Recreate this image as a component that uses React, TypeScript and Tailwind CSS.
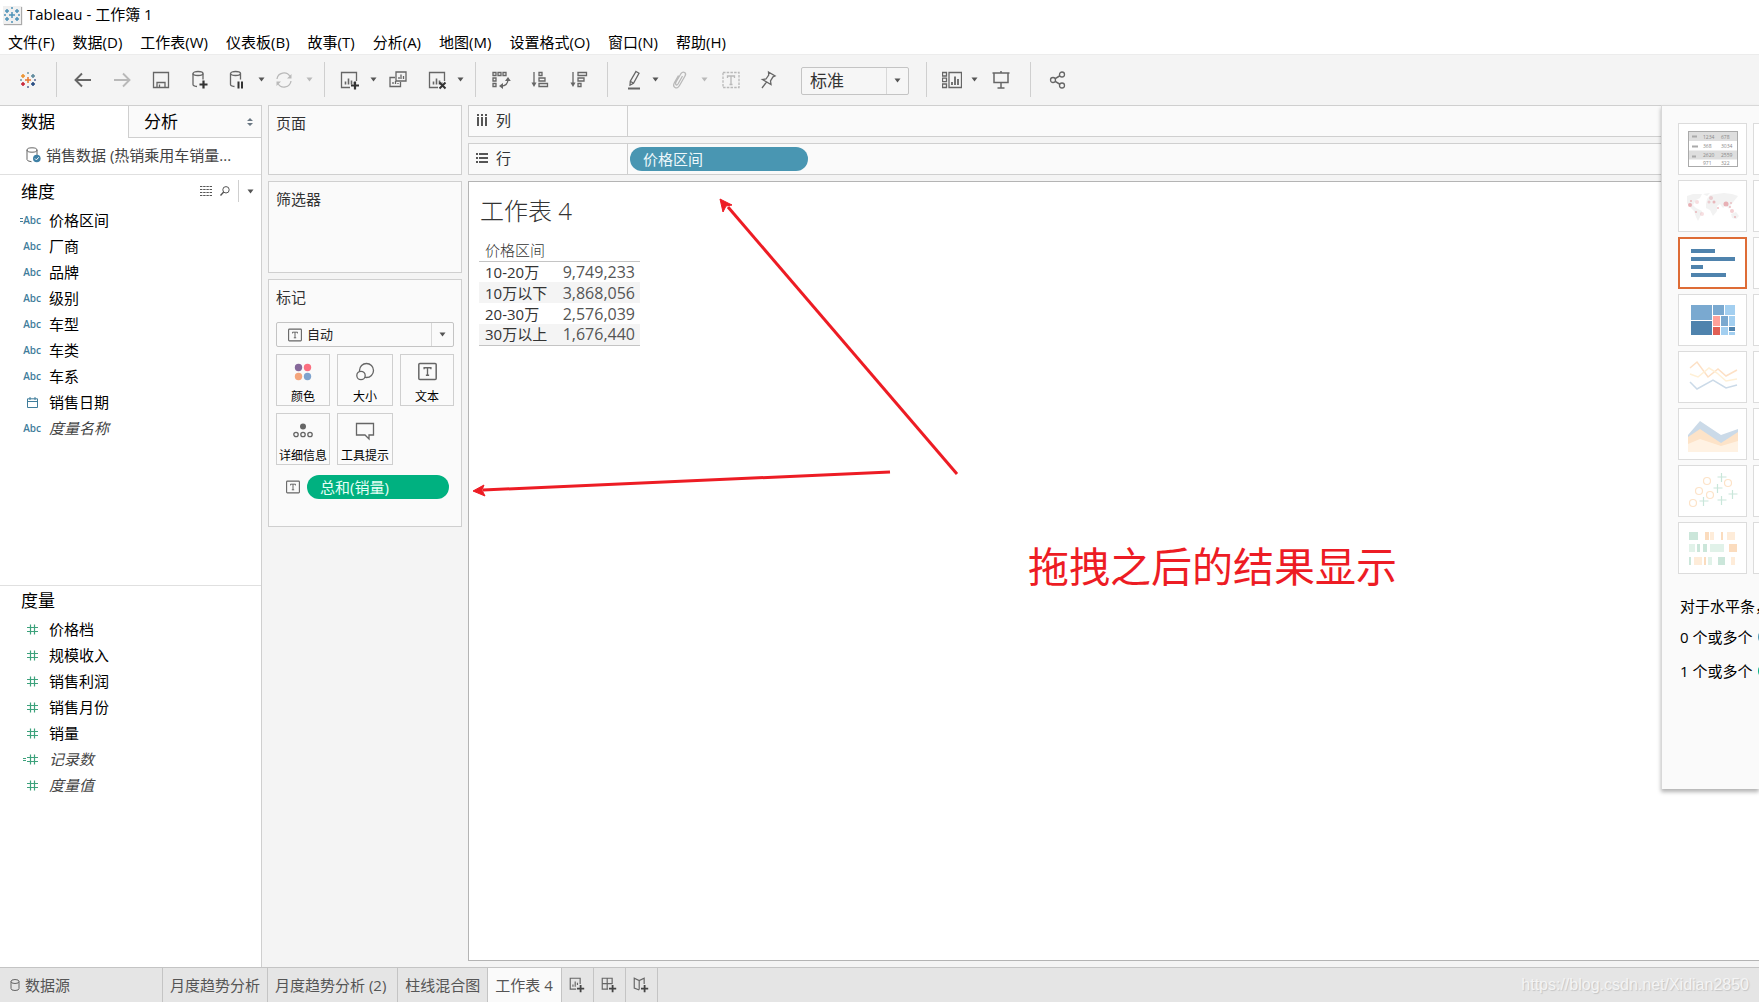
import type { ReactNode } from "react";

interface Field {
  name: string;
  icon: "abc" | "abc-calc" | "date" | "num" | "num-calc";
  italic?: boolean;
}

const MENUS = ["文件(F)", "数据(D)", "工作表(W)", "仪表板(B)", "故事(T)", "分析(A)", "地图(M)", "设置格式(O)", "窗口(N)", "帮助(H)"];

const DIMENSIONS: Field[] = [
  { name: "价格区间", icon: "abc-calc" },
  { name: "厂商", icon: "abc" },
  { name: "品牌", icon: "abc" },
  { name: "级别", icon: "abc" },
  { name: "车型", icon: "abc" },
  { name: "车类", icon: "abc" },
  { name: "车系", icon: "abc" },
  { name: "销售日期", icon: "date" },
  { name: "度量名称", icon: "abc", italic: true },
];

const MEASURES: Field[] = [
  { name: "价格档", icon: "num" },
  { name: "规模收入", icon: "num" },
  { name: "销售利润", icon: "num" },
  { name: "销售月份", icon: "num" },
  { name: "销量", icon: "num" },
  { name: "记录数", icon: "num-calc", italic: true },
  { name: "度量值", icon: "num", italic: true },
];

const ROWS = [
  { label: "10-20万", value: "9,749,233" },
  { label: "10万以下", value: "3,868,056" },
  { label: "20-30万", value: "2,576,039" },
  { label: "30万以上", value: "1,676,440" },
];

/* ---------- small drawings ---------- */

const LOGO_MARKS = [
  { x: 9, y: 9, r: 3, c: "#e8762d" },
  { x: 4, y: 5, r: 2, c: "#eb912c" },
  { x: 14, y: 5, r: 2, c: "#5b879b" },
  { x: 4, y: 13, r: 2, c: "#c72035" },
  { x: 14, y: 13, r: 2, c: "#1f457e" },
  { x: 9, y: 2, r: 1, c: "#7099a6" },
  { x: 9, y: 16, r: 1, c: "#5c6692" },
  { x: 2, y: 9, r: 1, c: "#7099a6" },
  { x: 16, y: 9, r: 1, c: "#5c6692" },
];

function TableauLogo({ mono }: { mono?: boolean }) {
  return (
    <svg width="18" height="18" viewBox="0 0 18 18" fill="none">
      {LOGO_MARKS.map((m, i) => (
        <path
          key={i}
          d={`M${m.x - m.r} ${m.y}h${m.r * 2}M${m.x} ${m.y - m.r}v${m.r * 2}`}
          stroke={mono ? "#4f93b8" : m.c}
          strokeWidth={m.r === 1 ? 1 : 1.5}
        />
      ))}
    </svg>
  );
}

function Icon({ children, faint, size = 20 }: { children: ReactNode; faint?: boolean; size?: number }) {
  return (
    <svg width={size} height={size} viewBox="0 0 20 20" fill="none" stroke={faint ? "#b9b9b9" : "#666"} strokeWidth="1.3">
      {children}
    </svg>
  );
}

function Caret({ faint, className }: { faint?: boolean; className?: string }) {
  return (
    <svg width="7" height="5" viewBox="0 0 7 5" className={className}>
      <path d="M0.5 0.5h6L3.5 4.5z" fill={faint ? "#b9b9b9" : "#555"} />
    </svg>
  );
}

function TextMark({ size = 14 }: { size?: number }) {
  return (
    <svg width={size} height={size} viewBox="0 0 14 14" fill="none" stroke="#666">
      <rect x="0.6" y="1.1" width="12.8" height="11.8" rx="0.8" strokeWidth="1.1" />
      <path d="M4.5 5.4V4.2h5v1.2M7 4.2v5.6M5.8 9.8h2.4" strokeWidth="1" />
    </svg>
  );
}

const BARS = <path d="M6.5 11.5v3M9.5 8.5v6M12.5 10.5v4M15 12.5v1" strokeWidth="1.6" />;

function FieldIcon({ icon }: { icon: Field["icon"] }) {
  if (icon === "date") {
    return (
      <svg width="11" height="11" viewBox="0 0 11 11" fill="none" stroke="#3f7d9b" className="mr-[3px]">
        <path d="M0.5 1.8h10v8.7h-10zM0.5 4.5h10M3 0v3M8 0v3" />
      </svg>
    );
  }
  if (icon === "abc" || icon === "abc-calc") {
    return (
      <span className="flex items-center text-[10px] leading-none font-semibold text-[#3f7d9b]">
        {icon === "abc-calc" && (
          <svg width="3" height="4" viewBox="0 0 3 4" fill="#3f7d9b"><path d="M0 0h3v1H0zM0 3h3v1H0z" /></svg>
        )}
        Abc
      </span>
    );
  }
  return (
    <svg width="15" height="11" viewBox="0 0 15 11" fill="none" stroke="#3da27c" className="mr-[3px]">
      <path d="M4 3.5h11M4 7.5h11M7.5 0.5v10M11.5 0.5v10" strokeWidth="1.2" />
      {icon === "num-calc" && <path d="M0 4.5h3M0 6.5h3" />}
    </svg>
  );
}

/* ---------- toolbar ---------- */

function Tool({ label, className, children }: { label: string; className: string; children: ReactNode }) {
  return (
    <button type="button" aria-label={label} className={`flex h-8 shrink-0 items-center justify-center ${className}`}>
      {children}
    </button>
  );
}

function Sep({ className }: { className: string }) {
  return <div className={`h-[35px] w-px shrink-0 bg-[#cfcfcf] ${className}`} />;
}

function Toolbar() {
  return (
    <div className="flex h-[51px] shrink-0 items-center border-t border-[#ececec] bg-[#f4f4f4] pb-px">
      <Tool label="起始页" className="mr-px w-[55px]"><TableauLogo /></Tool>
      <Sep className="mr-1.5" />
      <Tool label="撤消" className="w-[39px]"><Icon><path d="M18 10H3M9 3.5L2.5 10 9 16.5" strokeWidth="1.9" /></Icon></Tool>
      <Tool label="重做" className="w-[39px]"><Icon faint><path d="M2 10h15M11 3.5L17.5 10 11 16.5" strokeWidth="1.9" /></Icon></Tool>
      <Tool label="保存" className="w-[39px]">
        <Icon><path d="M2.5 2.5h15v15h-15zM6 17v-4.5h8V17M8.5 17v-2.5" /></Icon>
      </Tool>
      <Tool label="新建数据源" className="w-[39px]">
        <Icon>
          <ellipse cx="8" cy="3.5" rx="5" ry="2" />
          <path d="M3 3.5v11q0 1.6 4 2M13 3.5v6" />
          <path d="M13.5 10.5v8M9.5 14.5h8" stroke="#333" strokeWidth="2.2" />
        </Icon>
      </Tool>
      <Tool label="暂停自动更新" className="w-[37px]">
        <Icon>
          <ellipse cx="7.5" cy="3.5" rx="5" ry="2" />
          <path d="M2.5 3.5v11q0 1.6 4 2M12.5 3.5v6" />
          <path d="M10.5 11.5v7M14 11.5v7" stroke="#333" strokeWidth="2" />
        </Icon>
      </Tool>
      <Tool label="更新选项" className="w-2.5"><Caret /></Tool>
      <Tool label="运行更新" className="w-9">
        <Icon faint>
          <path d="M3 9a7 7 0 0 1 13-2.5M17 11a7 7 0 0 1-13 2.5" />
          <path d="M17.5 4v4.5H13zM2.5 16v-4.5H7z" fill="#b9b9b9" stroke="none" />
        </Icon>
      </Tool>
      <Tool label="刷新选项" className="w-3.5"><Caret faint /></Tool>
      <Sep className="mr-[5px] ml-2" />
      <Tool label="新建工作表" className="w-[38px]">
        <Icon>
          <path d="M11 17.5H2.5v-15h15V11" />
          {BARS}
          <path d="M16 11.5v8M12 15.5h8" stroke="#333" strokeWidth="2.2" />
        </Icon>
      </Tool>
      <Tool label="新建选项" className="w-2.5"><Caret /></Tool>
      <Tool label="复制工作表" className="w-10">
        <Icon>
          <path d="M8 2h10v9H8zM7 7.5H2v9h10.5V12M11 9V7M13 9V4.5M15.5 9V6M5 14v-2M7.5 14v-3M10 14v-1" />
        </Icon>
      </Tool>
      <Tool label="清除工作表" className="w-[37px]">
        <Icon>
          <path d="M11 17.5H2.5v-15h15V11" />
          {BARS}
          <path d="M12.5 12.5l6 6M18.5 12.5l-6 6" stroke="#333" strokeWidth="2" />
        </Icon>
      </Tool>
      <Tool label="清除选项" className="w-2.5"><Caret /></Tool>
      <Sep className="mr-[5px] ml-2.5" />
      <Tool label="交换行和列" className="w-[39px]">
        <Icon>
          <path d="M2 2.5h3v3H2zM7 2.5h3v3H7zM12 2.5h3v3h-3zM2 8h3v3H2zM2 13.5h3v3H2zM17 9q0 7-7 7" />
          <path d="M14 11l3-4 2.8 4zM12 13l-4 3 4 3z" fill="#666" stroke="none" />
        </Icon>
      </Tool>
      <Tool label="升序排序" className="w-[39px]">
        <Icon>
          <path d="M4 2v12M9 2.5h3v3H9zM9 8h6v3H9zM9 13.5h8.5v3H9z" />
          <path d="M1.5 12.5h5L4 17z" fill="#666" stroke="none" />
        </Icon>
      </Tool>
      <Tool label="降序排序" className="w-10">
        <Icon>
          <path d="M4 2v12M9 2.5h8.5v3H9zM9 8h6v3H9zM9 13.5h3v3H9z" />
          <path d="M1.5 12.5h5L4 17z" fill="#666" stroke="none" />
        </Icon>
      </Tool>
      <Sep className="mr-2.5 ml-2" />
      <Tool label="突出显示" className="w-8">
        <Icon>
          <path d="M12 1.5l3 1.7-5.5 10-3.5 2 .3-4zM6.3 11.2l3.2 2" />
          <path d="M4 18.5h12" strokeWidth="2" />
        </Icon>
      </Tool>
      <Tool label="突出显示选项" className="w-2.5"><Caret /></Tool>
      <Tool label="对成员分组" className="w-[39px]">
        <Icon faint>
          <path d="M12.5 6L8 14q-1 1.5-2 .8t0-2.8l5-8.5q1.8-2.2 3.6-1t.4 3.5l-5.5 9.5q-2 3.5-4.500 2t-.5-5l4-7" />
        </Icon>
      </Tool>
      <Tool label="分组选项" className="w-2.5"><Caret faint /></Tool>
      <Tool label="显示标记标签" className="w-11">
        <Icon faint>
          <path d="M2 2.5h16v15H2z" strokeDasharray="2.5 1.2" />
          <path d="M6.5 8V6h7v2M10 6v8.5M8.5 14.5h3" />
        </Icon>
      </Tool>
      <Tool label="固定轴" className="w-[30px]">
        <Icon>
          <path d="M10.5 2l6.5 4-2 .8-2.5 4 .5 3.7L4.5 9.5 8 9l2.7-4zM8.5 12L4 18" />
        </Icon>
      </Tool>
      <label className="mt-0.5 ml-[18px] flex h-[28px] w-[108px] shrink-0 items-stretch rounded-[2px] border border-[#c4c4c4] bg-[#f6f6f6]">
        <select aria-label="适合" className="min-w-0 flex-1 appearance-none pl-2 text-[17px] leading-6 text-[#333] outline-none">
          <option>标准</option>
        </select>
        <span className="flex w-[22px] items-center justify-center border-l border-[#d8d8d8]"><Caret /></span>
      </label>
      <Sep className="mr-2 ml-[17px]" />
      <Tool label="显示/隐藏卡" className="w-[34px]">
        <Icon>
          <path d="M0.5 2.5h4v3.5h-4zM0.5 8.2h4v3.5h-4zM0.5 14h4v3.5h-4zM7 2.5h12.5v15H7z" />
          <path d="M10 15v-3M13 15V6.5M16 15V9" strokeWidth="1.8" />
        </Icon>
      </Tool>
      <Tool label="卡选项" className="w-2.5"><Caret /></Tool>
      <Tool label="演示模式" className="w-11">
        <Icon><path d="M1.5 3h17M3 3v9.5h14V3M10 12.5V18M6.5 18h7M10 1v2" strokeWidth="1.5" /></Icon>
      </Tool>
      <Sep className="mr-2 ml-[7px]" />
      <Tool label="共享" className="w-[38px]">
        <Icon>
          <circle cx="5" cy="10" r="2.5" />
          <circle cx="14" cy="4.5" r="2.5" />
          <circle cx="14" cy="15.5" r="2.5" />
          <path d="M7.2 8.6l4.7-2.8M7.2 11.4l4.7 2.8" strokeWidth="1.6" />
        </Icon>
      </Tool>
    </div>
  );
}

/* ---------- left data pane ---------- */

function FieldList({ fields }: { fields: Field[] }) {
  return (
    <ul>
      {fields.map((f) => (
        <li key={f.name} className="flex h-[26px] items-center">
          <span className="flex w-[41px] shrink-0 items-center justify-end">
            <FieldIcon icon={f.icon} />
          </span>
          <span className={`ml-2 text-[15px] leading-5 ${f.italic ? "text-[#444] italic" : "text-black"}`}>{f.name}</span>
        </li>
      ))}
    </ul>
  );
}

function DataPane() {
  return (
    <aside className="flex w-[262px] shrink-0 flex-col border-t border-r border-[#cfcfcf] bg-white">
      <div className="flex h-[32px] shrink-0">
        <button type="button" className="w-[128px] pl-[21px] text-left text-[17px] text-black">数据</button>
        <button type="button" className="flex flex-1 items-center justify-between border-b border-l border-[#cfcfcf] bg-[#fafafa] pr-2 pl-[15px] text-[17px] text-black">
          分析
          <svg width="6" height="8" viewBox="0 0 6 8" fill="#6a7783"><path d="M3 0l3 3H0zM0 5h6L3 8z" /></svg>
        </button>
      </div>
      <div className="flex h-[37px] shrink-0 items-center border-b border-[#e0e0e0] pb-0.5 pl-[26px]">
        <svg width="15" height="16" viewBox="0 0 15 16" fill="none" stroke="#666">
          <ellipse cx="6" cy="3" rx="5" ry="2.2" />
          <path d="M1 3v9.5q0 1.8 4.5 2.2M11 3v5" />
          <circle cx="10.8" cy="11.5" r="3.8" fill="#3f81a6" stroke="none" />
          <path d="M9 11.5l1.4 1.4 2.3-2.6" stroke="#fff" />
        </svg>
        <span className="ml-[5px] text-[15px] whitespace-nowrap text-[#444]">销售数据 (热销乘用车销量...</span>
      </div>
      <section className="h-[410px] shrink-0">
        <div className="flex h-8 items-center pl-[21px]">
          <h2 className="flex-1 pt-0.5 text-[17px] text-black">维度</h2>
          <button type="button" aria-label="查看数据" className="mr-2">
            <svg width="12" height="10" viewBox="0 0 12 10" stroke="#555"><path d="M0 0.5h12M0 3.5h12M0 6.5h12M0 9.5h12" strokeDasharray="2.4 0.8" /></svg>
          </button>
          <button type="button" aria-label="查找字段" className="mr-2">
            <svg width="10" height="10" viewBox="0 0 10 10" fill="none" stroke="#555"><circle cx="6" cy="3.8" r="3.2" /><path d="M3.7 6L0.5 9.5" strokeWidth="1.4" /></svg>
          </button>
          <div className="h-[22px] w-px bg-[#cfcfcf]" />
          <button type="button" aria-label="维度菜单" className="flex w-[22px] justify-center"><Caret /></button>
        </div>
        <FieldList fields={DIMENSIONS} />
      </section>
      <section className="border-t border-[#e0e0e0]">
        <h2 className="flex h-[30px] items-center pl-[21px] text-[17px] text-black">度量</h2>
        <FieldList fields={MEASURES} />
      </section>
    </aside>
  );
}

/* ---------- cards ---------- */

function Card({ title, className, children }: { title: string; className: string; children?: ReactNode }) {
  return (
    <section className={`border border-[#cfcfcf] bg-[#fafafa] px-[7px] ${className}`}>
      <h3 className="pt-1.5 text-[15px] leading-[22px] text-[#333]">{title}</h3>
      {children}
    </section>
  );
}

function MarkButton({ label, children }: { label: string; children: ReactNode }) {
  return (
    <button type="button" className="flex h-[52px] flex-col items-center justify-between border border-[#cfcfcf] pt-[7px] text-[12px] leading-4 whitespace-nowrap text-black">
      {children}
      <span>{label}</span>
    </button>
  );
}

function Cards() {
  return (
    <div className="ml-1.5 flex w-[194px] shrink-0 flex-col gap-[6px]">
      <Card title="页面" className="h-[70px]" />
      <Card title="筛选器" className="h-[92px]" />
      <Card title="标记" className="h-[248px]">
        <label className="mt-3.5 flex h-[25px] items-stretch rounded-[2px] border border-[#c4c4c4]">
          <span className="flex w-[30px] items-center justify-end pr-[5px]"><TextMark /></span>
          <select aria-label="标记类型" className="min-w-0 flex-1 appearance-none text-[13px] text-[#222] outline-none">
            <option>自动</option>
          </select>
          <span className="flex w-[22px] items-center justify-center border-l border-[#d8d8d8]"><Caret /></span>
        </label>
        <div className="mt-[7px] grid grid-cols-[54fr_56fr_54fr] gap-[7px]">
          <MarkButton label="颜色">
            <svg width="20" height="20" viewBox="0 0 20 20">
              <circle cx="5.5" cy="5.5" r="3.7" fill="#86699a" />
              <circle cx="14.5" cy="5.5" r="3.7" fill="#fb6f80" />
              <circle cx="5.5" cy="14.5" r="3.7" fill="#f4a57c" />
              <circle cx="14.5" cy="14.5" r="3.7" fill="#7fa3cd" />
            </svg>
          </MarkButton>
          <MarkButton label="大小">
            <Icon><circle cx="11.5" cy="8.5" r="7" /><circle cx="6" cy="13.5" r="4.2" fill="#fafafa" /></Icon>
          </MarkButton>
          <MarkButton label="文本"><TextMark size={19} /></MarkButton>
          <MarkButton label="详细信息">
            <Icon>
              <circle cx="10" cy="5.5" r="3" fill="#666" stroke="none" />
              <circle cx="3" cy="13.5" r="2.2" />
              <circle cx="10" cy="13.5" r="2.2" />
              <circle cx="17" cy="13.5" r="2.2" />
            </Icon>
          </MarkButton>
          <MarkButton label="工具提示">
            <Icon><path d="M1.5 2.5h17v11.5H14v4l-4-4H1.5z" /></Icon>
          </MarkButton>
        </div>
        <div className="mt-2.5 flex items-center pr-[5px] pl-[10px]">
          <TextMark />
          <div className="ml-[7px] flex h-6 flex-1 items-center rounded-full bg-[#00b180] pl-[13px] text-[15px] text-[#e8fff6]">总和(销量)</div>
        </div>
      </Card>
    </div>
  );
}

/* ---------- sheet ---------- */

function Shelf({ label, icon, children }: { label: string; icon: ReactNode; children?: ReactNode }) {
  return (
    <div className="flex h-8 shrink-0 items-stretch border border-r-0 border-[#cfcfcf] bg-[#fafafa]">
      <div className="flex w-[159px] items-center border-r border-[#cfcfcf] pb-0.5 pl-[7px] text-[15px] text-[#333]">
        {icon}
        <span className="ml-[7px]">{label}</span>
      </div>
      <div className="flex flex-1 items-center pl-0.5">{children}</div>
    </div>
  );
}

function Sheet() {
  return (
    <div className="relative min-h-0 flex-1 border border-r-0 border-[#b4b4b4] bg-white pt-[11px] pl-2.5">
      <h1 className="pl-px text-[24px] leading-9 font-light text-[#333]">工作表 4</h1>
      <table className="mt-2.5 w-[161px] border-b border-[#c4c4c4] text-[#333]">
        <thead>
          <tr className="border-b border-[#c4c4c4]">
            <th colSpan={2} scope="col" className="h-[22px] pl-1.5 text-left text-[15px] leading-5 font-light">价格区间</th>
          </tr>
        </thead>
        <tbody>
          {ROWS.map((r) => (
            <tr key={r.label} className="h-[21px] even:bg-[#f4f4f4]">
              <th scope="row" className="pl-1.5 text-left text-[15px] leading-5 font-normal whitespace-nowrap">{r.label}</th>
              <td className="pr-[5px] text-right text-[16px] leading-5 text-[#555]">{r.value}</td>
            </tr>
          ))}
        </tbody>
      </table>

      {/* annotations drawn over the sheet */}
      <svg width="500" height="320" viewBox="0 0 500 320" className="absolute top-[10px] left-0" fill="#ed1c24" stroke="#ed1c24">
        <path d="M488 282L259 15" strokeWidth="3" />
        <path d="M251 7l12 6-6 1-3 6z" strokeWidth="1" />
        <path d="M421 280L14 298" strokeWidth="3" />
        <path d="M4 299l11-6-2 5 3 6z" strokeWidth="1" />
      </svg>
      <p className="absolute top-[356px] left-[559px] text-[41px] leading-[56px] whitespace-nowrap text-[#ed1c24]">拖拽之后的结果显示</p>
    </div>
  );
}

/* ---------- show me ---------- */

const SCATTER_RINGS = [[12, 36], [18, 24], [26, 14], [29, 28], [47, 16]];
const SCATTER_CROSSES = [[21.5, 33], [35.5, 20], [39.5, 9], [39.5, 32], [50.5, 26]];
const MAP_DOTS = [
  [8, 23, 2, 0.45], [9, 19, 1, 0.4], [15, 20, 2, 0.2], [14, 30, 1, 0.4], [20, 32, 2, 0.2], [27, 20, 1.5, 0.25], [29, 16, 2, 0.25],
  [32, 20, 1.5, 0.4], [36, 26, 1, 0.4], [44, 22, 2.5, 0.45], [49, 21, 1, 0.35], [48, 25, 1, 0.4], [50, 29, 2, 0.3], [53, 35, 1, 0.4],
];

const THUMBS: { name: string; art: ReactNode }[] = [
  {
    name: "文本表",
    art: (
      <>
        <rect x="8.5" y="7.5" width="49" height="35" fill="#fff" stroke="#aaa" />
        <path d="M9 12.5h48M9 31h48" stroke="#dedede" strokeWidth="9" />
        <path d="M12 12.5h5M12 22.5h6M12 32.5h4" stroke="#aaa" strokeWidth="2" />
        <g fontSize="5" fill="#888">
          <text x="23" y="15">1234</text><text x="41" y="15">678</text>
          <text x="23" y="24">368</text><text x="41" y="24">3034</text>
          <text x="23" y="33">2620</text><text x="41" y="33">2559</text>
          <text x="23" y="41">971</text><text x="41" y="41">322</text>
        </g>
      </>
    ),
  },
  {
    name: "符号地图",
    art: (
      <>
        <path
          d="M7 15l6-2 9 0-2 4-4 2-3 5 3 3 6 3-1 4-2 4-1 2-2-4-2-6-4-4-3-4zM23 13l7-1-3 3zM27 18l3-4 6-1 8-1 8 1 6 2-4 5-3 4-2 4-3-4-3 3-3-4-3 2 0 5-4 5-3-6-4-2 0-4zM51 33l5-2 3 4-3 3-4-1z"
          fill="#f2f2f2"
        />
        {MAP_DOTS.map(([x, y, r, o]) => <circle key={`${x}-${y}`} cx={x + 2} cy={y + 1} r={r} fill="#d9606a" opacity={o} />)}
      </>
    ),
  },
  { name: "水平条", art: <path d="M11 11h24v4H11zM11 19h44v4H11zM11 27h12v4H11zM11 35h35v4H11z" fill="#4f83ad" /> },
  {
    name: "树状图",
    art: (
      <>
        <path d="M11 10h21v15H11zM33 10h11v10H33zM41 21h7v10h-7z" fill="#7aa9d0" />
        <path d="M11 26h21v14H11zM49 32h6v4h-6z" fill="#4f83ad" />
        <path d="M45 10h10v10H45zM49 21h6v10h-6zM41 32h7v8h-7zM49 37h6v3h-6z" fill="#a3cff0" />
        <path d="M33 21h7v10h-7z" fill="#ffa19a" />
        <path d="M33 32h7v8h-7z" fill="#e15f55" />
      </>
    ),
  },
  {
    name: "线图",
    art: (
      <g fill="none" strokeWidth="1.5">
        <path d="M10 16l7-6 11 15 10-8 8 7 11-6" stroke="#fde0c5" />
        <path d="M10 22l8 3 11-9 8 5 9 8 11-2" stroke="#fff0d6" />
        <path d="M10 30l7 7 16-9 13 8 11-3" stroke="#cbdae8" />
      </g>
    ),
  },
  {
    name: "面积图",
    art: (
      <>
        <path d="M8 26l12-14 21 14 17-6v22H8z" fill="#cbdae8" />
        <path d="M8 28l12-8 21 14 17-11v20H8z" fill="#fde3c8" />
        <path d="M8 35l12-5 21 7 17-5v11H8z" fill="#fff2e3" />
      </>
    ),
  },
  {
    name: "散点图",
    art: (
      <g fill="none" strokeWidth="1.2">
        {SCATTER_RINGS.map(([x, y]) => <circle key={x} cx={x + 1} cy={y + 1} r="3.5" stroke="#fde3c8" />)}
        {SCATTER_CROSSES.map(([x, y]) => <path key={`${x}-${y}`} d={`M${x - 2} ${y + 2}h9M${x + 2} ${y - 2}v9`} stroke="#c9e6da" />)}
      </g>
    ),
  },
  {
    name: "突出显示表",
    art: (
      <>
        <path d="M9 9h9v8H9zM17 21h3v8h-3zM23 21h4v8h-4zM9 34h2v8H9zM38 34h7v8h-7z" fill="#cbe6da" />
        <path d="M9 21h6v8H9zM30 21h14v8H30zM28 34h4v8h-4z" fill="#e1f2e9" />
        <path d="M25 9h4v8h-4zM41 9h2v8h-2zM49 21h8v8h-8zM24 34h2v8h-2z" fill="#fbdcbe" />
        <path d="M30 9h4v8h-4zM47 9h8v8h-8zM14 34h8v8h-8zM51 34h4v8h-4z" fill="#feecd9" />
      </>
    ),
  },
];

function ShowMe() {
  return (
    <aside className="absolute top-0 right-0 w-[98px] overflow-hidden border-t border-l border-[#d8d8d8] bg-[#fafafa] pt-[17px] pb-[107px] pl-4 shadow-[0_3px_4px_rgba(0,0,0,0.3)]">
      <div className="grid w-36 grid-cols-2 gap-x-1.5 gap-y-[5px]">
        {THUMBS.map((t) => [
          <button
            key={t.name}
            type="button"
            aria-label={t.name}
            className={`flex h-[52px] items-center justify-center bg-white ${t.name === "水平条" ? "border-2 border-[#de6c36]" : "border border-[#dcdcdc]"}`}
          >
            <svg width="66" height="50" viewBox="0 0 66 50" className="shrink-0">{t.art}</svg>
          </button>,
          <div key={`${t.name}-next`} className="h-[52px] border border-[#dcdcdc] bg-white" />,
        ])}
      </div>
      <div className="mt-[21px] w-36 pl-0.5 text-[15px] leading-[22px] whitespace-nowrap text-black">
        <p>对于水平条，</p>
        <p className="mt-[9px] flex items-center gap-1.5">
          0 个或多个 <span className="h-4 w-12 rounded-full bg-[#4996b2]" />
        </p>
        <p className="mt-3 flex items-center gap-1.5">
          1 个或多个 <span className="h-4 w-12 rounded-full bg-[#00b180]" />
        </p>
      </div>
    </aside>
  );
}

/* ---------- bottom tabs ---------- */

const PLUS = <path d="M14 10v8M10 14h8" stroke="#444" strokeWidth="2" />;

function SheetTabs() {
  const tab = "flex items-center border-r border-[#c4c4c4] whitespace-nowrap";
  return (
    <footer className="flex h-[35px] shrink-0 items-stretch border-t border-[#c4c4c4] bg-[#e5e5e5] text-[15px] text-[#555]">
      <button type="button" className={`${tab} w-[163px] gap-[5px] pl-2.5`}>
        <svg width="10" height="12" viewBox="0 0 10 12" fill="none" stroke="#666">
          <path d="M1 2.5v7q0 2 4 2t4-2v-7M1 2.5q0-2 4-2t4 2-4 2-4-2z" />
        </svg>
        数据源
      </button>
      <button type="button" className={`${tab} px-[7px]`}>月度趋势分析</button>
      <button type="button" className={`${tab} pr-[11px] pl-[7px]`}>月度趋势分析 (2)</button>
      <button type="button" className={`${tab} px-[7px]`}>柱线混合图</button>
      <button type="button" aria-current="page" className={`${tab} bg-[#fafafa] pr-2 pl-[7px]`}>工作表 4</button>
      <button type="button" aria-label="新建工作表标签" className={`${tab} w-8 justify-center`}>
        <Icon size={18}><path d="M9 14.5H2.5v-12h11V9M5.5 12V9.5M8 12V6M10.5 10V7.5" />{PLUS}</Icon>
      </button>
      <button type="button" aria-label="新建仪表板" className={`${tab} w-8 justify-center`}>
        <Icon size={18}><path d="M9 14.5H2.5v-12h11V9M2.5 8.5h11M8 2.5v12" />{PLUS}</Icon>
      </button>
      <button type="button" aria-label="新建故事" className={`${tab} w-8 justify-center`}>
        <Icon size={18}><path d="M13.5 9V2.5L8 5 2.5 2.5v11L8 15.500M8 5v10" />{PLUS}</Icon>
      </button>
      <span className="ml-auto self-center pr-2.5 text-[16px] leading-5 text-[#f4f4f4] [font-family:'Liberation_Sans',Arial,sans-serif] [text-shadow:1px_1px_1px_#c4c4c4]">
        https://blog.csdn.net/Xidian2850
      </span>
    </footer>
  );
}

export default function App() {
  return (
    <div className="flex h-screen flex-col overflow-hidden bg-[#f4f4f4] [font-family:'Open_Sans','Noto_Sans_CJK_SC',sans-serif]">
      <header className="shrink-0 bg-white">
        <div className="flex h-[29px] items-center pl-[3px] text-[15px] text-black">
          <span className="flex size-[18px] items-center justify-center bg-[#f0f0f0] shadow-[1px_1px_1px_#aaa]"><TableauLogo mono /></span>
          <span className="ml-1.5">Tableau - 工作簿 1</span>
        </div>
        <nav className="flex h-[25px] items-center gap-[18px] pl-2 text-[15px] leading-5 text-black">
          {MENUS.map((m) => <button key={m} type="button" className="whitespace-nowrap">{m}</button>)}
        </nav>
      </header>
      <Toolbar />
      <main className="relative flex min-h-0 flex-1">
        <DataPane />
        <Cards />
        <div className="ml-1.5 flex min-w-0 flex-1 flex-col gap-1.5 pb-1.5">
          <Shelf
            label="列"
            icon={<svg width="13" height="12" viewBox="0 0 13 12" fill="#555"><path d="M1 0h2v2H1zM1 3h2v9H1zM5 0h2v2H5zM5 3h2v9H5zM9 0h2v2H9zM9 3h2v9H9z" /></svg>}
          />
          <Shelf
            label="行"
            icon={<svg width="13" height="10" viewBox="0 0 13 10" fill="#555"><path d="M0 0h2v2H0zM3 0h9v2H3zM0 4h2v2H0zM3 4h9v2H3zM0 8h2v2H0zM3 8h9v2H3z" /></svg>}
          >
            <div className="flex h-6 w-[178px] items-center rounded-full bg-[#4996b2] pl-[13px] text-[15px] text-[#eef8fb]">价格区间</div>
          </Shelf>
          <Sheet />
        </div>
        <ShowMe />
      </main>
      <SheetTabs />
    </div>
  );
}
